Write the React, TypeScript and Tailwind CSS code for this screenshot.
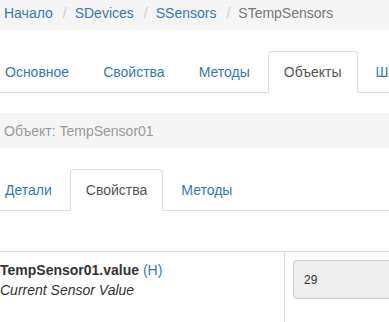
import React from "react";

const Tab = ({ label, active }: { label: string; active?: boolean }) => (
  <li className="mr-[2px] -mb-px shrink-0">
    <span
      className={
        active
          ? "block px-[15px] py-[10px] border border-[#ddd] border-b-white bg-white rounded-t-[4px] text-[#555]"
          : "block px-[15px] py-[10px] border border-transparent rounded-t-[4px] text-[#337ab7]"
      }
    >
      {label}
    </span>
  </li>
);

export default function App() {
  return (
    <div className="w-[389px] h-[322px] overflow-hidden bg-white font-['Liberation_Sans',Arial,sans-serif] text-[14px] leading-[20px] text-[#333]">
      <div className="ml-[-11px] w-[520px]">
        <div className="h-[30px] pt-[3px] px-[15px] bg-[#f5f5f5] flex whitespace-nowrap">
          <span className="text-[#337ab7]">Начало</span>
          <span className="pl-[10px] pr-[8px] text-[#ccc]">/</span>
          <span className="text-[#337ab7]">SDevices</span>
          <span className="pl-[10px] pr-[8px] text-[#ccc]">/</span>
          <span className="text-[#337ab7]">SSensors</span>
          <span className="pl-[10px] pr-[8px] text-[#ccc]">/</span>
          <span className="text-[#777]">STempSensors</span>
        </div>

        <ul className="mt-[21px] flex flex-nowrap whitespace-nowrap border-b border-[#ddd]">
          <Tab label="Основное" />
          <Tab label="Свойства" />
          <Tab label="Методы" />
          <Tab label="Объекты" active />
          <Tab label="Шаблоны" />
        </ul>

        <div className="mt-[20px] h-[35px] py-[7.5px] px-[15px] bg-[#f5f5f5] text-[#999] whitespace-nowrap">
          Объект: TempSensor01
        </div>

        <ul className="mt-[21px] flex flex-nowrap whitespace-nowrap border-b border-[#ddd]">
          <Tab label="Детали" />
          <Tab label="Свойства" active />
          <Tab label="Методы" />
        </ul>

        <div className="mt-[40px] ml-[3px] border-t border-[#ddd] grid grid-cols-[292px_1fr]">
          <div className="p-[8px]">
            <div className="whitespace-nowrap">
              <span className="font-bold">TempSensor01.value</span>{" "}
              <span className="text-[#337ab7]">(H)</span>
            </div>
            <div className="italic">Current Sensor Value</div>
            <div className="h-[40px]" />
          </div>
          <div className="border-l border-[#ddd] p-[8px]">
            <div className="h-[39px] rounded-[4px] border border-[#ccc] bg-[#eee] pl-[10px] flex items-center text-[12px] text-[#333]">
              29
            </div>
          </div>
        </div>
      </div>
    </div>
  );
}
